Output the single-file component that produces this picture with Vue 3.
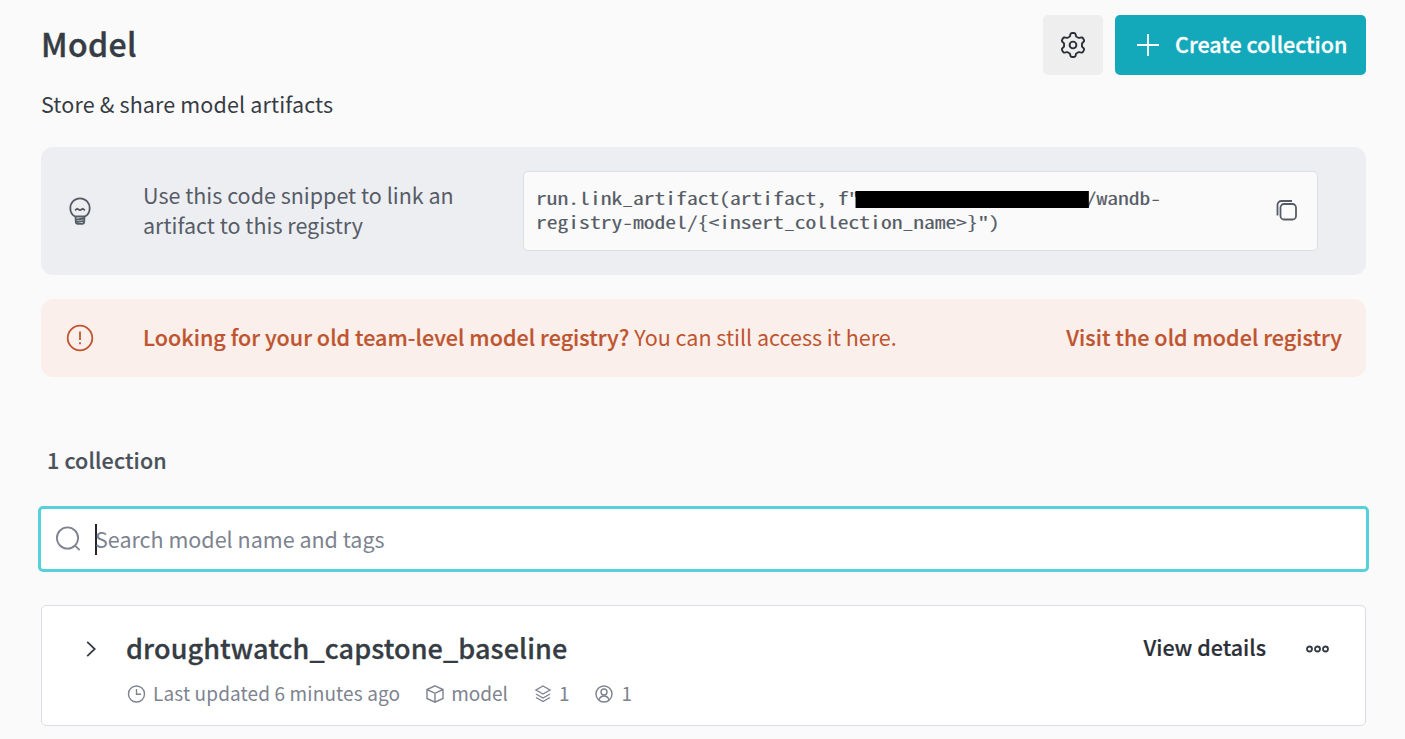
<script setup>
const collection = {
  name: 'droughtwatch_capstone_baseline',
  updated: 'Last updated 6 minutes ago',
  type: 'model',
  versions: 1,
  members: 1,
}

// Outline of a six-toothed gear with soft teeth, centred on 14,14.
const gearPoints = Array.from({ length: 120 }, (_, i) => {
  const angle = (i / 120) * Math.PI * 2
  const radius = 10.5 + 1.6 * Math.tanh(-2.2 * Math.cos(6 * angle))
  return `${(14 + radius * Math.cos(angle)).toFixed(2)},${(14 + radius * Math.sin(angle)).toFixed(2)}`
}).join(' ')
</script>

<template>
  <main class="page">
    <header class="header">
      <h1 class="title">Model</h1>
      <div class="actions">
        <button class="settings" aria-label="Settings">
          <svg width="28" height="28" viewBox="0 0 28 28">
            <circle cx="14" cy="14" r="3.400" />
            <polygon :points="gearPoints" />
          </svg>
        </button>
        <button class="create">
          <svg width="22" height="22" viewBox="0 0 22 22"><path d="M11 0v22M0 11h22" /></svg>
          <span>Create collection</span>
        </button>
      </div>
    </header>
    <p class="subtitle">Store &amp; share model artifacts</p>

    <section class="tip">
      <svg class="bulb" width="24" height="30" viewBox="0 0 24 30">
        <path d="M7.200 20.500C4.200 19 2.300 15.500 2.300 12a9.700 9.700 0 0 1 19.400 0c0 3.500-1.900 7-4.900 8.500zM7.500 20.500l.3 5.500c.1 1.300.8 1.800 2 1.800h4.400c1.200 0 1.900-.5 2-1.800l.3-5.500M8 23.700l8-1.200M8.300 26l7-.8" />
        <path d="M7 14.200l2.300-1.500L12 14.200l2.700-1.500L17 14.200" />
      </svg>
      <p class="tip-text">Use this code snippet to link an<br />artifact to this registry</p>
      <div class="snippet">
        <code>run.link_artifact(artifact, f"<i class="redacted"></i>/wandb-<br />registry-model/{&lt;insert_collection_name&gt;}")</code>
        <svg class="copy" width="22" height="22" viewBox="0 0 22 22">
          <rect x="4.500" y="4" width="15.500" height="15.500" rx="3.500" />
          <path d="M1.500 15.500V5a4 4 0 0 1 4-4H16" />
        </svg>
      </div>
    </section>

    <section class="alert">
      <svg class="warn" width="28" height="28" viewBox="0 0 28 28">
        <circle cx="14" cy="14" r="12.300" />
        <path d="M14 7.500v8.500M14 18.300v2" />
      </svg>
      <p class="alert-text"><b>Looking for your old team-level model registry?</b> <span>You can still access it here.</span></p>
      <a class="visit">Visit the old model registry</a>
    </section>

    <h2 class="count">1 collection</h2>

    <div class="search">
      <svg width="26" height="26" viewBox="0 0 26 26"><circle cx="12.500" cy="12" r="10.600" /><path d="M19.800 19.300l4.800 4.800" /></svg>
      <i class="caret"></i>
      <span class="placeholder">Search model name and tags</span>
    </div>

    <article class="card">
      <svg class="chevron" width="10" height="16" viewBox="0 0 10 16"><path d="M1.200 .8l7.500 7.200L1.200 15.200" /></svg>
      <div class="info">
        <h3 class="name">{{ collection.name }}</h3>
        <div class="meta">
          <span class="item updated">
            <svg width="18" height="18" viewBox="0 0 18 18"><circle cx="9.500" cy="9" r="8" /><path d="M9.500 4v5.300h4.500" /></svg>
            <span>{{ collection.updated }}</span>
          </span>
          <span class="item type">
            <svg width="18" height="18" viewBox="0 0 18 18"><path d="M9 .8l8 3.700v9L9 17.200l-8-3.700v-9zM1 4.500l8 3.800 8-3.800M9 8.300v8.900" /></svg>
            <span>{{ collection.type }}</span>
          </span>
          <span class="item versions">
            <svg width="16" height="18" viewBox="0 0 16 18"><path d="M8 1l7 4-7 4-7-4zM1 9l7 4 7-4M1 12.500l7 4 7-4" /></svg>
            <span>{{ collection.versions }}</span>
          </span>
          <span class="item members">
            <svg width="18" height="18" viewBox="0 0 18 18"><circle cx="9" cy="9" r="8" /><circle cx="9" cy="7" r="3" /><path d="M3.800 15c1-2.700 2.800-4 5.200-4s4.200 1.300 5.200 4" /></svg>
            <span>{{ collection.members }}</span>
          </span>
        </div>
      </div>
      <a class="details">View details</a>
      <svg class="more" width="24" height="8" viewBox="0 0 24 8">
        <circle cx="4.500" cy="4" r="2.500" /><circle cx="12.500" cy="4" r="2.500" /><circle cx="20.500" cy="4" r="2.500" />
      </svg>
    </article>
  </main>
</template>

<style>
body {
  background: #fafafa;
}
</style>

<style scoped>
.page {
  box-sizing: border-box;
  width: 1405px;
  height: 739px;
  overflow: hidden;
  padding: 15px 39px 0 41px;
  background: #fafafa;
  color: #363c44;
  font: 400 21.5px/30px "Noto Sans CJK SC", "Noto Sans", sans-serif;
}
h1, h2, h3, p { margin: 0; }
svg {
  display: block;
  flex: none;
  fill: none;
  stroke: currentColor;
}
button {
  border: 0;
  padding: 0;
  font: inherit;
}
.header {
  display: flex;
  justify-content: space-between;
  height: 60px;
}
.title {
  font-size: 32px;
  line-height: 56px;
  font-weight: 500;
  letter-spacing: 0.4px;
  -webkit-text-stroke: 0.4px currentColor;
}
.actions {
  display: flex;
  gap: 12px;
}
.settings {
  display: flex;
  align-items: center;
  justify-content: center;
  width: 60px;
  height: 60px;
  border-radius: 5px;
  background: #eeeeee;
  color: #2b3038;
}
.settings svg {
  stroke-width: 1.9;
  stroke-linejoin: round;
}
.create {
  display: flex;
  align-items: center;
  width: 251px;
  height: 60px;
  padding-left: 22px;
  border-radius: 5px;
  background: #13a9ba;
  color: #fff;
  font-weight: 500;
  white-space: nowrap;
  -webkit-text-stroke: 0.3px currentColor;
}
.create svg { stroke-width: 1.8; }
.create span {
  margin: 0 0 3px 16px;
}
.subtitle {
  margin-top: 14px;
  letter-spacing: 0.14px;
}
.tip {
  display: flex;
  align-items: center;
  box-sizing: border-box;
  height: 128px;
  margin-top: 28px;
  padding: 0 48px 0 27px;
  border-radius: 12px;
  background: #edeef2;
  color: #565c66;
}
.bulb {
  stroke-width: 1.8;
  stroke-linejoin: round;
}
.tip-text {
  width: 380px;
  margin: 0 0 3px 51px;
  white-space: nowrap;
}
.snippet {
  display: flex;
  align-items: center;
  justify-content: space-between;
  box-sizing: border-box;
  width: 795px;
  height: 80px;
  padding: 0 19px 0 12px;
  border: 1px solid #dcdee3;
  border-radius: 5px;
  background: #fafafa;
}
.snippet code {
  margin-bottom: 2px;
  font: 400 17px/24px "Noto Sans Mono CJK SC", "DejaVu Sans Mono", monospace;
  white-space: nowrap;
  transform: scaleX(1.268);
  transform-origin: 0 50%;
  -webkit-text-stroke: 0.15px currentColor;
}
.redacted {
  position: relative;
  display: inline-block;
  width: 178.5px;
  height: 17px;
  vertical-align: -3px;
}
.redacted::before {
  content: "";
  position: absolute;
  inset: 0 -2px 0 -3px;
  background: #000;
}
.copy { stroke-width: 1.8; }
.alert {
  display: flex;
  align-items: center;
  box-sizing: border-box;
  height: 78px;
  margin-top: 24px;
  padding: 0 24px 0 25px;
  border-radius: 12px;
  background: #faefea;
  color: #bf5530;
  white-space: nowrap;
}
.warn { stroke-width: 1.8; }
.alert-text {
  flex: 1;
  margin: 0 0 3px 49px;
}
.alert b, .visit {
  font-weight: 500;
  letter-spacing: 0.04px;
  -webkit-text-stroke: 0.2px currentColor;
}
.visit { margin-bottom: 3px; }
.count {
  margin: 68px 0 0 6px;
  font-size: 21.5px;
  font-weight: 500;
  letter-spacing: 0.15px;
  color: #4b515a;
  -webkit-text-stroke: 0.2px currentColor;
}
.search {
  display: flex;
  align-items: center;
  box-sizing: border-box;
  height: 66px;
  margin: 31px -3px 0;
  padding-left: 14px;
  border: 3px solid #56d0da;
  border-radius: 5px;
  background: #fff;
  color: #7d838f;
}
.search svg { stroke-width: 1.8; }
.caret {
  width: 2px;
  height: 31px;
  margin-left: 14px;
  background: #22262c;
}
.placeholder { margin-left: -2px; }
.card {
  display: flex;
  box-sizing: border-box;
  height: 121px;
  margin-top: 33px;
  padding: 0 36px 0 44px;
  border: 1px solid #dcdee3;
  border-radius: 5px;
  background: #fff;
}
.chevron {
  margin-top: 35px;
  stroke-width: 1.8;
}
.info {
  flex: 1;
  margin: 22px 0 0 31px;
}
.name {
  margin-left: -1px;
  font-size: 27px;
  line-height: 40px;
  font-weight: 500;
  letter-spacing: 0.1px;
  -webkit-text-stroke: 0.3px currentColor;
}
.meta {
  display: flex;
  margin-top: 10px;
  font-size: 19px;
  line-height: 30px;
  color: #7d838f;
}
.item {
  display: flex;
  align-items: center;
  gap: 8px;
}
.item svg {
  margin-top: 2px;
  overflow: visible;
  stroke-width: 1.4;
}
.updated { letter-spacing: 0.13px; }
.type {
  gap: 7px;
  margin-left: 26px;
}
.versions { margin-left: 27px; }
.members {
  gap: 9px;
  margin-left: 25px;
}
.details {
  margin-top: 26px;
  font-weight: 500;
  color: #2b3038;
  -webkit-text-stroke: 0.2px currentColor;
}
.more {
  margin: 39px 0 0 39px;
  stroke-width: 1.8;
}
</style>
